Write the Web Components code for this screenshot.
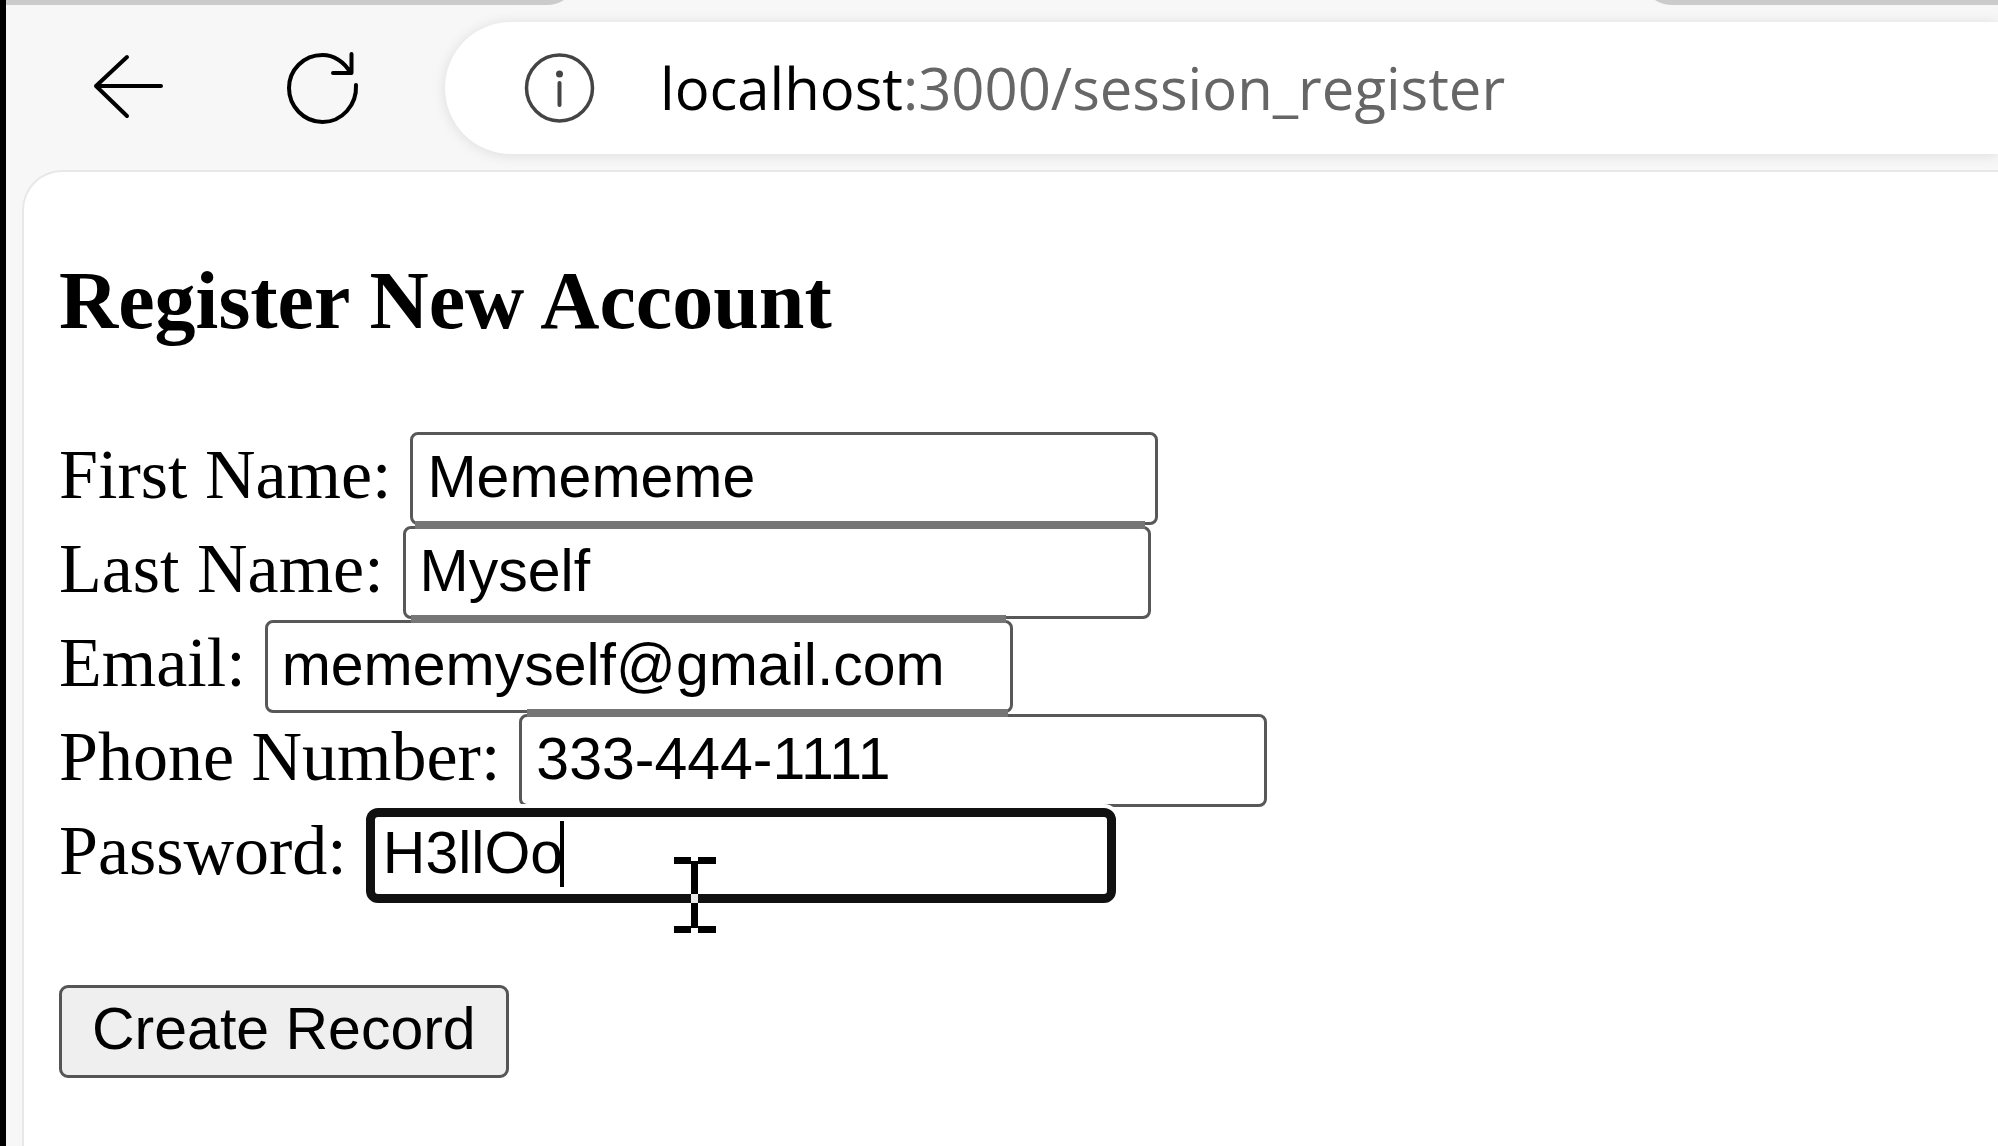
<!DOCTYPE html>
<html lang="en">
<head>
<meta charset="utf-8">
<title>Register New Account</title>
<style>
  html, body { margin: 0; min-height: 100vh; background: #f7f7f7; color: #000; }
  body { display: flex; overflow-x: hidden; }
  browser-window { flex: 1; min-width: 0; }
</style>
</head>
<body>
<browser-window>
  <browser-toolbar slot="toolbar">
    <address-bar><b slot="host">localhost</b><span slot="path">:3000/session_register</span></address-bar>
  </browser-toolbar>
  <register-form></register-form>
</browser-window>

<script>
function define(name, html, setup) {
  const template = document.createElement('template');
  template.innerHTML = html;
  customElements.define(name, class extends HTMLElement {
    constructor() {
      super();
      this.attachShadow({ mode: 'open' }).append(template.content.cloneNode(true));
    }
    connectedCallback() { if (setup) setup(this, this.shadowRoot); }
  });
}

define('browser-window', `
  <style>
    :host { display: flex; flex-direction: column; box-sizing: border-box; border-left: 6px solid #000; background: #f7f7f7; overflow: hidden; }
    main { flex: 1; margin-left: 16px; border: 2px solid #e8e8e8; border-width: 2px 0 0 2px; border-radius: 40px 0 0 0; background: #fff; padding: 82px 36px 40px 35px; }
  </style>
  <slot name="toolbar"></slot>
  <main><slot></slot></main>
`);

define('browser-toolbar', `
  <style>
    :host { display: block; }
    .tabs { display: flex; justify-content: space-between; height: 5px; }
    .tabs svg { display: block; height: 5px; }
    .tabs i { flex: 1; background: #cbcbcb; }
    .left, .right { display: flex; }
    .left { width: 28%; }
    .right { width: 343px; }
    nav { display: flex; align-items: center; height: 132px; padding: 17px 0 16px 80px; }
    button { display: flex; align-items: center; justify-content: center; width: 84px; height: 84px; padding: 0; border: 0; background: none; margin-right: 110px; }
    button + button { margin-right: 81px; }
    button svg { display: block; width: 84px; height: 84px; fill: none; stroke: #000; stroke-width: 4; stroke-linecap: round; stroke-linejoin: round; }
    slot { display: block; flex: 1; min-width: 0; }
  </style>
  <div class="tabs" aria-hidden="true">
    <div class="left"><i></i><svg width="18" viewBox="0 0 18 5"><path d="M0 5Q11 5 18 0H0Z" fill="#cbcbcb"/></svg></div>
    <div class="right"><svg width="18" viewBox="0 0 18 5"><path d="M18 5Q7 5 0 0H18Z" fill="#cbcbcb"/></svg><i></i></div>
  </div>
  <nav aria-label="Browser">
    <button aria-label="Back"><svg viewBox="0 0 84 84"><path d="M75 40H10M41 11L10 40L41 70"/></svg></button>
    <button aria-label="Refresh"><svg viewBox="0 0 84 84"><path d="M76 39C77 59 62 76 42.500 76C23.500 76 9 60 9 42C9 24 23.500 9 42.500 9C54 9 64 16 70 26M71.500 8V27H53"/></svg></button>
    <slot></slot>
  </nav>
`);

define('address-bar', `
  <style>
    :host { display: flex; align-items: center; height: 132px; box-sizing: border-box; border-radius: 66px 0 0 66px; background: #fff; box-shadow: 0 1px 14px rgba(0,0,0,.11); padding-left: 78px; }
    svg { flex: none; width: 74px; height: 74px; margin-right: 63px; }
    .url { font: 58px/80px "Open Sans", "Noto Sans", sans-serif; white-space: nowrap; color: #666; }
    ::slotted(b) { font-weight: 400; color: #000; }
  </style>
  <svg viewBox="0 0 74 74" fill="none" stroke="#444" stroke-width="4" stroke-linecap="round" role="img" aria-label="Site information"><circle cx="36.500" cy="37" r="33" stroke-width="3.500"/><path d="M36.500 32V54"/><circle cx="36.500" cy="23" r="3.5" fill="#444" stroke="none"/></svg>
  <div class="url"><slot name="host"></slot><slot name="path"></slot></div>
`);

define('form-field', `
  <style>
    :host { display: flex; align-items: flex-start; gap: 19px; height: 92px; font: 70px/78px "Liberation Serif", "Times New Roman", serif; }
    label { flex: none; padding-top: 4px; white-space: nowrap; }
    .box { position: relative; flex: none; }
    input { display: block; box-sizing: border-box; width: 748px; height: 93px; margin: 0; padding: 0 14px 4px; border: 3px solid #585858; border-radius: 8px; background: #fff; color: #000; font: 59px "Liberation Sans", Arial, sans-serif; outline: 0; }
    :host([active]) input { width: 750px; height: 95px; padding: 0 8px 6px; border: 9px solid #111; border-radius: 12px; box-shadow: 0 0 0 4px #fff; }
    .seam { display: none; position: absolute; z-index: 1; bottom: -4px; height: 8px; left: var(--seam-start); right: var(--seam-end); background: #767676; }
    :host([seam]) .seam { display: block; }
  </style>
  <label for="control"></label>
  <div class="box"><input id="control"><i class="seam"></i><slot></slot></div>
`, (host, root) => {
  root.querySelector('label').textContent = host.getAttribute('label');
  const input = root.querySelector('input');
  input.type = host.getAttribute('type') || 'text';
  input.value = host.getAttribute('value');
  const seam = host.getAttribute('seam');
  if (seam) {
    const [start, end] = seam.split(' ');
    host.style.setProperty('--seam-start', start);
    host.style.setProperty('--seam-end', end);
  }
});

define('text-caret', `
  <style>:host { display: block; position: absolute; left: 194px; top: 13px; width: 4px; height: 66px; background: #000; }</style>
`);

define('mouse-pointer', `
  <style>
    :host { display: block; position: absolute; left: 308px; top: 49px; }
    svg { display: block; }
  </style>
  <svg width="42" height="76" viewBox="0 0 42 76" aria-hidden="true"><path d="M0 0H17V4H24V0H42V7H24V69H42V76H24V71H17V76H0V69H17V7H0Z"/><path fill="#e8e8e8" d="M17 37H24V46H17Z"/></svg>
`);

define('register-form', `
  <style>
    :host { display: block; }
    h3 { margin: 0 0 84px; font: bold 82px/94px "Liberation Serif", "Times New Roman", serif; }
    form { display: flex; flex-direction: column; gap: 2px; margin: 0; }
    button { align-self: flex-start; height: 93px; margin: 83px 0 0; padding: 0 30px 5px; border: 3px solid #555; border-radius: 9px; background: #efefef; color: #000; font: 59px "Liberation Sans", Arial, sans-serif; }
  </style>
  <h3>Register New Account</h3>
  <form>
    <form-field label="First Name:" value="Memememe" seam="5px 13px"></form-field>
    <form-field label="Last Name:" value="Myself" seam="8px 145px"></form-field>
    <form-field label="Email:" value="mememyself@gmail.com" seam="262px 5px"></form-field>
    <form-field label="Phone Number:" value="333-444-1111"></form-field>
    <form-field label="Password:" value="H3llOo" active><text-caret></text-caret><mouse-pointer></mouse-pointer></form-field>
    <button type="button">Create Record</button>
  </form>
`);
</script>
</body>
</html>
